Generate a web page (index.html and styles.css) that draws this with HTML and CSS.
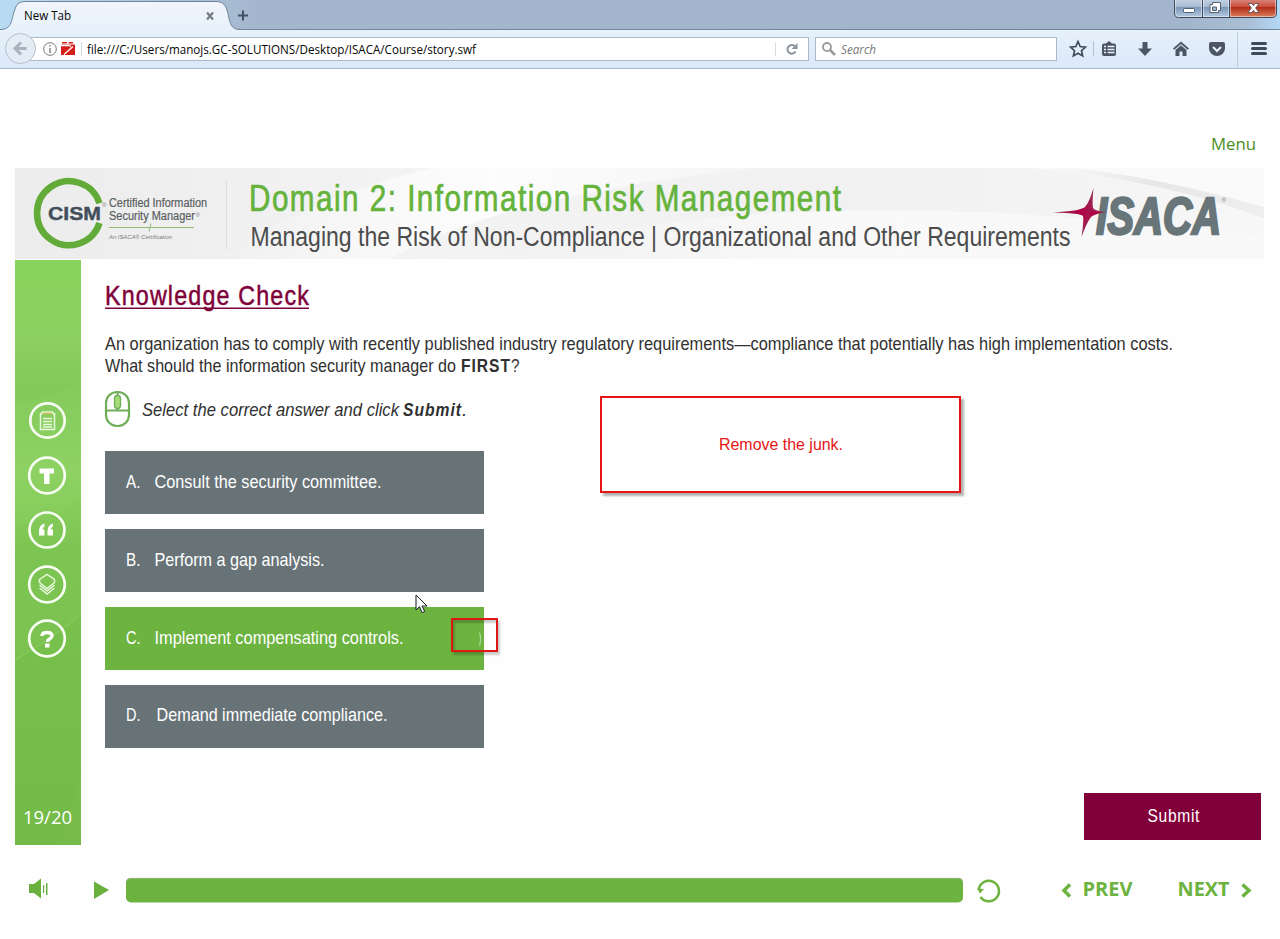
FILE: index.html
```html
<!DOCTYPE html>
<html lang="en">
<head>
<meta charset="utf-8">
<title>New Tab</title>
<link rel="stylesheet" href="styles.css">
</head>
<body>
<header class="chrome">
  <div class="tabstrip">
    <svg class="tabs" width="300" height="30" viewBox="0 0 300 30">
      <defs><linearGradient id="tab" x1="0" y1="0" x2="0" y2="1"><stop offset="0" stop-color="#f1f5fc"/><stop offset="1" stop-color="#e7f1fb"/></linearGradient></defs>
      <path d="M0 29.500C13 29.500 11 19 15 9C17 3 20 1.500 26 1.500H215C222 1.500 225 4 227 10C230 20 229 29.500 240 29.500V30H0Z" fill="url(#tab)"/>
      <path d="M0 29.500C13 29.500 11 19 15 9C17 3 20 1.500 26 1.500H215C222 1.500 225 4 227 10C230 20 229 29.500 240 29.500" fill="none" stroke="#718499"/>
      <text class="ui" x="24" y="20" textLength="47" lengthAdjust="spacingAndGlyphs">New Tab</text>
      <path d="M207 12.500l6 7M213 12.500l-6 7" stroke="#747b84" stroke-width="2.200"/>
      <path d="M238 15.500h10M243 10.500v10" stroke="#435063" stroke-width="2"/>
    </svg>
    <svg class="window-buttons" width="106" height="19" viewBox="0 0 106 19">
      <defs>
        <linearGradient id="glass" x1="0" y1="0" x2="0" y2="1"><stop offset="0" stop-color="#c7d6e7"/><stop offset=".45" stop-color="#a8bbd1"/><stop offset=".5" stop-color="#7e98b8"/><stop offset="1" stop-color="#b2c9df"/></linearGradient>
        <linearGradient id="close" x1="0" y1="0" x2="0" y2="1"><stop offset="0" stop-color="#db9286"/><stop offset=".45" stop-color="#cb4e3d"/><stop offset=".5" stop-color="#b22d1a"/><stop offset="1" stop-color="#db7d57"/></linearGradient>
      </defs>
      <path d="M.5-2V13q0 4 4 4H56V-2Z" fill="url(#glass)"/>
      <path d="M56-2V17H98q4 0 4-4V-2Z" fill="url(#close)"/>
      <path d="M.5-2V13q0 4.500 4 4.500H98q4.500 0 4.500-4.500V-2M28.500 0V17M55.500 0V17" fill="none" stroke="#3f4b5e"/>
      <path d="M1.500 0V13q0 3.500 3 3.500H27.500V0M29.500 0V16.500H54.500V0M56.500 0V16.500H98q3.500 0 3.500-3.500V0" fill="none" stroke="#fff" opacity=".45"/>
      <rect x="9.500" y="8.500" width="11" height="4" rx="1" fill="#fff" stroke="#536173"/>
      <path d="M38.500 2.500h8v8h-2v2h-8.500v-8h2.500Z" fill="#fff" stroke="#536173"/><path d="M38.500 7h4v3.500h-4Z" fill="#a5b7ca" stroke="#536173"/>
      <path d="M74 3.500h4l1.500 2.300L81 3.500h4l-3.400 4.500 3.400 4.500h-4l-1.500-2.300-1.500 2.300h-4L77.400 8Z" fill="#fff" stroke="#594a50" stroke-width=".8"/>
    </svg>
  </div>
  <div class="toolbar">
    <svg class="back" width="34" height="36" viewBox="0 0 34 36"><circle cx="16.500" cy="18.500" r="15" fill="#e4ecf5" stroke="#b5c1ce"/><path d="M22.500 18.500H12M17 12.500l-6 6 6 6" fill="none" stroke="#a9b3bf" stroke-width="3"/></svg>
    <div class="address">
      <svg width="780" height="22" viewBox="0 0 780 22">
        <circle cx="21" cy="11" r="6.300" fill="none" stroke="#777"/><path d="M21 10v5M21 7v1.500" stroke="#777" stroke-width="1.400"/>
        <path d="M32 6.500h14v10.500H32Z" fill="#d51e1a"/><path d="M33 4h5v1.500h-5Zm6.500 0H44V5.500h-4.500Z" fill="#d51e1a"/><path d="M32 7.500h8l2 1M35 16.500l9-8" fill="none" stroke="#fff" stroke-width="1.300"/>
        <path d="M52.500 4v14M746.500 4v14" stroke="#d5dce4"/>
        <text class="ui" x="58" y="15.500" textLength="389" lengthAdjust="spacingAndGlyphs">file:///C:/Users/manojs.GC-SOLUTIONS/Desktop/ISACA/Course/story.swf</text>
        <path d="M766.500 13.500a4.300 4.300 0 1 1-1-5.500" fill="none" stroke="#8b949f" stroke-width="2"/><path d="M768.500 5v6h-6Z" fill="#8b949f"/>
      </svg>
    </div>
    <div class="search">
      <svg width="240" height="22" viewBox="0 0 240 22"><circle cx="11" cy="9" r="4" fill="none" stroke="#999" stroke-width="1.800"/><path d="M14 12l5 5" stroke="#999" stroke-width="2.500"/><text class="ui hint" x="25" y="15.500" textLength="35" lengthAdjust="spacingAndGlyphs">Search</text></svg>
    </div>
    <svg class="tools" width="223" height="38" viewBox="1057 30 223 38" fill="#4b5563">
      <path d="M1078 41.500l2.200 5 5.200.6-3.900 3.600 1.100 5.200-4.600-2.700-4.600 2.700 1.100-5.200-3.900-3.600 5.200-.6Z" fill="none" stroke="#3f4a59" stroke-width="1.700"/>
      <path d="M1093.500 41v15" stroke="#b8c2ce"/>
      <path d="M1106 43.500l3-2.500 3 2.500h2q2 0 2 2V54q0 2-2 2h-10q-2 0-2-2V45.500q0-2 2-2Z"/><path d="M1104 46.500h2m1.500 0h7M1104 49.500h2m1.500 0h7M1104 52.500h2m1.500 0h7" stroke="#e9f1fb" stroke-width="1.500"/>
      <path d="M1142.500 42h5v6.500h4.500l-7 7.500-7-7.500h4.500Z"/>
      <path d="M1181 41.500l8 7-1.300 1.300-6.700-5.800-6.700 5.800L1173 48.500Z"/><path d="M1175.500 50l5.500-4.700 5.500 4.700v6h-4v-4.500h-3V56h-4Z"/>
      <path d="M1211 42h12q2 0 2 2v4.500a8 7.500 0 0 1-16 0V44q0-2 2-2Z"/><path d="M1213 47l4 4 4-4" fill="none" stroke="#edf4fc" stroke-width="2"/>
      <path d="M1237.500 32v35" stroke="#c0cbd8"/><path d="M1252.500 43.500h13M1252.500 48.500h13M1252.500 53.500h13" stroke="#3f4a59" stroke-width="3" stroke-linecap="round"/>
    </svg>
  </div>
</header>

<main class="course">
  <nav class="menu"><svg width="45" height="24"><text class="open" x="0" y="17" textLength="45" lengthAdjust="spacingAndGlyphs">Menu</text></svg></nav>
  <svg class="banner" width="1249" height="91" viewBox="15 168 1249 91">
    <defs>
      <linearGradient id="bg"><stop offset="0" stop-color="#ececed"/><stop offset=".3" stop-color="#f3f3f4"/><stop offset=".7" stop-color="#f1f1f2"/><stop offset="1" stop-color="#f7f7f7"/></linearGradient>
      <linearGradient id="sweep"><stop offset="0" stop-color="#fff" stop-opacity="0"/><stop offset=".5" stop-color="#fff"/><stop offset="1" stop-color="#fff" stop-opacity=".3"/></linearGradient>
      <linearGradient id="shade"><stop offset="0" stop-color="#e9e9ea" stop-opacity="0"/><stop offset=".5" stop-color="#e7e7e8"/><stop offset="1" stop-color="#eeeeef"/></linearGradient>
      <radialGradient id="star"><stop offset="0" stop-color="#b00043"/><stop offset="1" stop-color="#94365a"/></radialGradient>
    </defs>
    <path d="M15 168H1264V259H15Z" fill="url(#bg)"/>
    <path d="M225 259Q290 205 430 168H760Q500 195 390 259Z" fill="url(#sweep)" opacity=".8"/>
    <path d="M500 259Q760 175 1264 236V259Z" fill="url(#sweep)" opacity=".6"/>
    <path d="M1030 168Q1150 178 1264 207V168Z" fill="#fafafa"/>
    <path d="M1040 168Q1160 180 1264 218V207Q1150 175 1070 168Z" fill="url(#shade)"/>
    <path d="M226.500 181v69" stroke="#dedfe0"/>
    <path d="M99.500 203.300a32 32 0 1 0 0 19.700" fill="none" stroke="#63ab38" stroke-width="6.500"/>
    <text class="logo-name" x="48" y="220" textLength="53" lengthAdjust="spacingAndGlyphs">CISM</text>
    <text class="logo-copy" x="109" y="207" textLength="98" lengthAdjust="spacingAndGlyphs">Certified Information</text>
    <text class="logo-copy" x="109" y="220" textLength="86" lengthAdjust="spacingAndGlyphs">Security Manager</text>
    <text class="logo-note" x="195.500" y="217">®</text><text class="logo-note" x="102" y="207">®</text>
    <path d="M109 227.500h85M151 223.500l-2 8" stroke="#8fbd77"/>
    <text class="logo-note" x="109" y="239" textLength="63" lengthAdjust="spacingAndGlyphs">An ISACA® Certification</text>
    <text class="narrow domain" x="249" y="211" textLength="593.500" lengthAdjust="spacingAndGlyphs">Domain 2: Information Risk Management</text>
    <text class="narrow lesson" x="250.500" y="246" textLength="820" lengthAdjust="spacingAndGlyphs">Managing the Risk of Non-Compliance | Organizational and Other Requirements</text>
    <path d="M1053 212.500Q1080 211 1085 207Q1089 203 1093.500 188Q1092 203 1093 208Q1095 211 1106 212Q1095 214 1091 217Q1087 222 1081.500 237Q1084 220 1083 216Q1080 213 1053 212.500Z" fill="url(#star)"/>
    <text class="isaca" x="1096" y="234" textLength="125" lengthAdjust="spacingAndGlyphs">ISACA</text>
    <path d="M1090 211Q1096 211.500 1106 212Q1096 213 1090 216Z" fill="#b00043"/>
    <text class="logo-note" x="1221.500" y="202">®</text>
  </svg>

  <div class="slide">
    <aside class="rail">
      <svg width="66" height="585" viewBox="15 260 66 585">
        <defs><linearGradient id="rail" x1="0" y1="0" x2="0" y2="1"><stop offset="0" stop-color="#87d35b"/><stop offset=".13" stop-color="#8bd060"/><stop offset=".22" stop-color="#82c85a"/><stop offset=".36" stop-color="#8bd161"/><stop offset=".5" stop-color="#7dc553"/><stop offset="1" stop-color="#76bb49"/></linearGradient></defs>
        <path d="M15 260H81V845H15Z" fill="url(#rail)"/>
        <path d="M15 404Q50 400 81 382V500Q50 520 15 526Z" fill="#9add70" opacity=".12"/>
        <path d="M15 660Q55 637 81 614V780L55 845H15Z" fill="#68b438" opacity=".15"/>
        <path d="M15 660Q55 637 81 614" fill="none" stroke="#a0dc79" stroke-width="1.500" opacity=".3"/>
        <g fill="none" stroke="#f7fdf3" stroke-width="2.700"><circle cx="47.500" cy="420.500" r="17.200"/><circle cx="47" cy="475.500" r="17.800"/><circle cx="47" cy="530" r="17.500"/><circle cx="47" cy="584.500" r="17.800"/><circle cx="47" cy="638.500" r="17.800"/></g>
        <g fill="none" stroke="#e8f8dd" stroke-width="1.500"><path d="M40.500 413v16.500h14V413M40.500 415l2-3h10l2 3M43 418.500h9M43 421.500h9M43 424.500h9M43 427h9"/><path d="M39.500 579.500l7.500-5 7.500 5v3l-7.500 6-7.500-6ZM39.500 585l7.500 6 7.500-6M39.500 588l7.500 6 7.500-6"/></g>
        <path d="M43 413.500h9" stroke="#dcb85d" stroke-width="1.500"/>
        <path d="M39.500 468.500h14.500v5h-4.500v10.500h-5.500v-10.500h-4.500Z" fill="#fff"/>
        <path d="M39 531q0-6 5.500-7.500v3q-2 1-2 3h2v6H39Zm8.500 0q0-6 5.500-7.500v3q-2 1-2 3h2v6h-5.500Z" fill="#fff"/>
        <path d="M42 636q0-3.500 5-3.500t5 3.500q0 1.500-2.500 3-2 1-2 3" fill="none" stroke="#fff" stroke-width="3.400"/><path d="M45 643.500h4.500v4H45Z" fill="#fff"/>
        <text class="count" x="23" y="824" textLength="49" lengthAdjust="spacingAndGlyphs">19/20</text>
      </svg>
    </aside>
    <section class="question">
      <svg class="heading" width="210" height="50" viewBox="105 267 210 50"><text class="narrow check" x="105" y="305" textLength="205" lengthAdjust="spacingAndGlyphs">Knowledge Check</text><path d="M105 308.200H309" stroke="#7f0038" stroke-width="1.400"/></svg>
      <svg class="stem" width="1080" height="62" viewBox="105 317 1080 62">
        <text class="narrow body" x="105" y="350" textLength="1068" lengthAdjust="spacingAndGlyphs">An organization has to comply with recently published industry regulatory requirements—compliance that potentially has high implementation costs.</text>
        <text class="narrow body" x="105" y="372" textLength="351" lengthAdjust="spacingAndGlyphs">What should the information security manager do</text>
        <text class="narrow body strong" x="461" y="372" textLength="50" lengthAdjust="spacingAndGlyphs">FIRST</text>
        <text class="narrow body" x="511" y="372" textLength="8.500" lengthAdjust="spacingAndGlyphs">?</text>
      </svg>
      <svg class="prompt" width="380" height="60" viewBox="105 379 380 60">
        <rect x="106" y="392" width="23" height="34" rx="11" fill="none" stroke="#70ad59" stroke-width="2.200"/><path d="M106 410.500h23M117.500 393v4M117.500 407v4" stroke="#70ad59" stroke-width="2"/><rect x="114.500" y="395.500" width="6" height="13" rx="3" fill="#a3dd78" stroke="#70ad59" stroke-width="1.300"/>
        <text class="narrow body slanted" x="142" y="416" textLength="257" lengthAdjust="spacingAndGlyphs">Select the correct answer and click</text>
        <text class="narrow body slanted strong" x="403" y="416" textLength="59" lengthAdjust="spacingAndGlyphs">Submit</text><text class="narrow body slanted" x="462" y="416">.</text>
      </svg>
      <div class="answers">
        <div class="answer"><svg width="379" height="63"><text class="narrow option" x="21" y="37" textLength="14.500" lengthAdjust="spacingAndGlyphs">A.</text><text class="narrow option" x="49.500" y="37" textLength="227" lengthAdjust="spacingAndGlyphs">Consult the security committee.</text></svg></div>
        <div class="answer"><svg width="379" height="63"><text class="narrow option" x="21" y="37" textLength="14.500" lengthAdjust="spacingAndGlyphs">B.</text><text class="narrow option" x="49.500" y="37" textLength="170" lengthAdjust="spacingAndGlyphs">Perform a gap analysis.</text></svg></div>
        <div class="answer selected"><svg width="379" height="63"><text class="narrow option" x="21" y="37" textLength="14.500" lengthAdjust="spacingAndGlyphs">C.</text><text class="narrow option" x="49.500" y="37" textLength="249" lengthAdjust="spacingAndGlyphs">Implement compensating controls.</text><path d="M374.500 25q3 7 0 14q1.500-7 0-14Z" fill="#c3e4ae" stroke="#a9d58c" stroke-width=".5"/></svg></div>
        <div class="answer"><svg width="379" height="63"><text class="narrow option" x="21" y="36" textLength="14.500" lengthAdjust="spacingAndGlyphs">D.</text><text class="narrow option" x="51.500" y="36" textLength="231" lengthAdjust="spacingAndGlyphs">Demand immediate compliance.</text></svg></div>
      </div>
      <div class="submit"><svg width="177" height="47"><text class="narrow option spaced" x="63.500" y="29" textLength="52.500" lengthAdjust="spacingAndGlyphs">Submit</text></svg></div>
    </section>
  </div>

  <footer class="player">
    <svg class="sound" width="80" height="40" viewBox="28 870 80 40" fill="#69b13c"><path d="M29 884h5l7-5.500v20l-7-5.500h-5ZM43 885h1.200v8H43Zm3-2h1.500v12H46ZM94 881.500l15 8.500-15 9Z"/></svg>
    <div class="seek"></div>
    <svg class="controls" width="294" height="40" viewBox="970 870 294 40">
      <path d="M980.500 897a10.200 10.200 0 1 0-1.700-8" fill="none" stroke="#6db33f" stroke-width="2.500"/><path d="M977 888.500l7 .5-4 4.500Z" fill="#6db33f"/>
      <path d="M1070 884.500l-6 6 6 6M1242.500 884.500l6.500 6-6.500 6" fill="none" stroke="#6db33f" stroke-width="3.500"/>
      <text class="step" x="1082.500" y="895.500" textLength="50" lengthAdjust="spacingAndGlyphs">PREV</text><text class="step" x="1177.500" y="895.500" textLength="52" lengthAdjust="spacingAndGlyphs">NEXT</text>
    </svg>
  </footer>
</main>
<div class="note"><svg width="357" height="93"><text class="note-text" x="117" y="52" textLength="124" lengthAdjust="spacingAndGlyphs">Remove the junk.</text></svg></div>
<div class="marker"></div>
<svg class="pointer" width="14" height="21" viewBox="0 0 14 21"><path d="M1 1v15l3.500-3.300 2.700 6 2.500-1.200-2.600-5.500H12Z" fill="#fff" stroke="#151c26"/></svg>
</body>
</html>
```
FILE: styles.css
```css
* { box-sizing: border-box; }
body { margin: 0; width: 1280px; height: 939px; overflow: hidden; position: relative; background: #fefefe; font-family: "Open Sans", sans-serif; }
svg { display: block; flex: none; overflow: visible; }
.chrome { height: 69px; border-bottom: 1px solid #a9b9ca; }
.tabstrip { height: 30px; display: flex; justify-content: space-between; background: linear-gradient(90deg, #b9dcf3 0, #a4b6cd 260px, #a2b5cc 1190px, #a9c0d7 1250px, #b2d8f5 1280px); box-shadow: inset 0 -1px #718499; }
.window-buttons { overflow: hidden; }
.toolbar { height: 38px; display: flex; align-items: flex-start; background: linear-gradient(#e7f1fb, #dce8f9); }
.back { position: relative; z-index: 1; margin: 0 -10px 0 4px; }
.address, .search { height: 24px; margin-top: 7px; border: 1px solid #a9bacb; background: #fff; }
.address { width: 781px; }
.search { width: 242px; margin-left: 6px; }
.ui { font: 12px "Open Sans", sans-serif; fill: #050505; }
.hint { font-style: italic; fill: #777; }
.course { padding: 64px 15px 0; }
.menu { display: flex; justify-content: flex-end; height: 35px; padding-right: 9px; }
.open { font: 17px "Open Sans", sans-serif; fill: #4b8e23; }
.slide { display: flex; gap: 24px; padding-top: 1px; }
.narrow { font-family: "Liberation Sans Narrow", "Liberation Sans", sans-serif; }
.logo-name { font: bold 18.5px "Liberation Sans", sans-serif; fill: #424f5b; stroke: #424f5b; stroke-width: .4px; }
.logo-copy { font: 12px "Liberation Sans", sans-serif; fill: #5a5e60; stroke: #5a5e60; stroke-width: .2px; }
.logo-note { font: italic 6px "Liberation Sans", sans-serif; fill: #77797a; }
.domain { font-size: 36px; letter-spacing: 1.8px; fill: #65b33b; stroke: #65b33b; stroke-width: .7px; }
.lesson { font-size: 27px; fill: #4c4c4c; }
.isaca { font: italic bold 51px "Liberation Sans", sans-serif; fill: #687579; stroke: #687579; stroke-width: 2.5px; }
.count { font: 18px "Open Sans", sans-serif; fill: #fff; }
.question { width: 1157px; height: 585px; padding-top: 7px; }
.check { font-size: 28px; letter-spacing: 1.4px; fill: #7f0038; stroke: #7f0038; stroke-width: .5px; }
.body { font-size: 19px; fill: #303030; }
.strong { font-weight: bold; letter-spacing: 1.2px; }
.slanted { font-style: italic; }
.answers { display: grid; gap: 15px; width: 379px; padding-top: 12px; }
.answer { height: 63px; background: #687377; }
.selected { background: #6cb33f; }
.option { font-size: 19px; fill: #fff; }
.spaced { letter-spacing: .8px; }
.submit { width: 177px; height: 47px; margin: 45px 1px 0 auto; background: #820039; }
.player { display: flex; align-items: center; height: 40px; margin-top: 25px; padding-left: 13px; }
.seek { width: 837px; height: 25px; margin: 0 7px 0 18px; border-radius: 5px; background: #6db33f; border-top: 1px solid #a8b59f; transform: translateY(-.5px); }
.step { font: bold 19px "Open Sans", sans-serif; fill: #6db33f; }
.note { position: absolute; left: 600px; top: 396px; width: 361px; height: 97px; border: 2px solid #e51515; background: #fff; box-shadow: 3px 3px 2px rgba(0,0,0,.3); }
.note-text { font: 16px "Liberation Sans", sans-serif; fill: #e51515; }
.marker { position: absolute; left: 451px; top: 618px; width: 47px; height: 34px; border: 2px solid #df1714; box-shadow: 2px 3px 2px rgba(0,0,0,.2), inset 2px 3px 2px rgba(0,0,0,.2); }
.pointer { position: absolute; left: 415px; top: 594px; }
```
